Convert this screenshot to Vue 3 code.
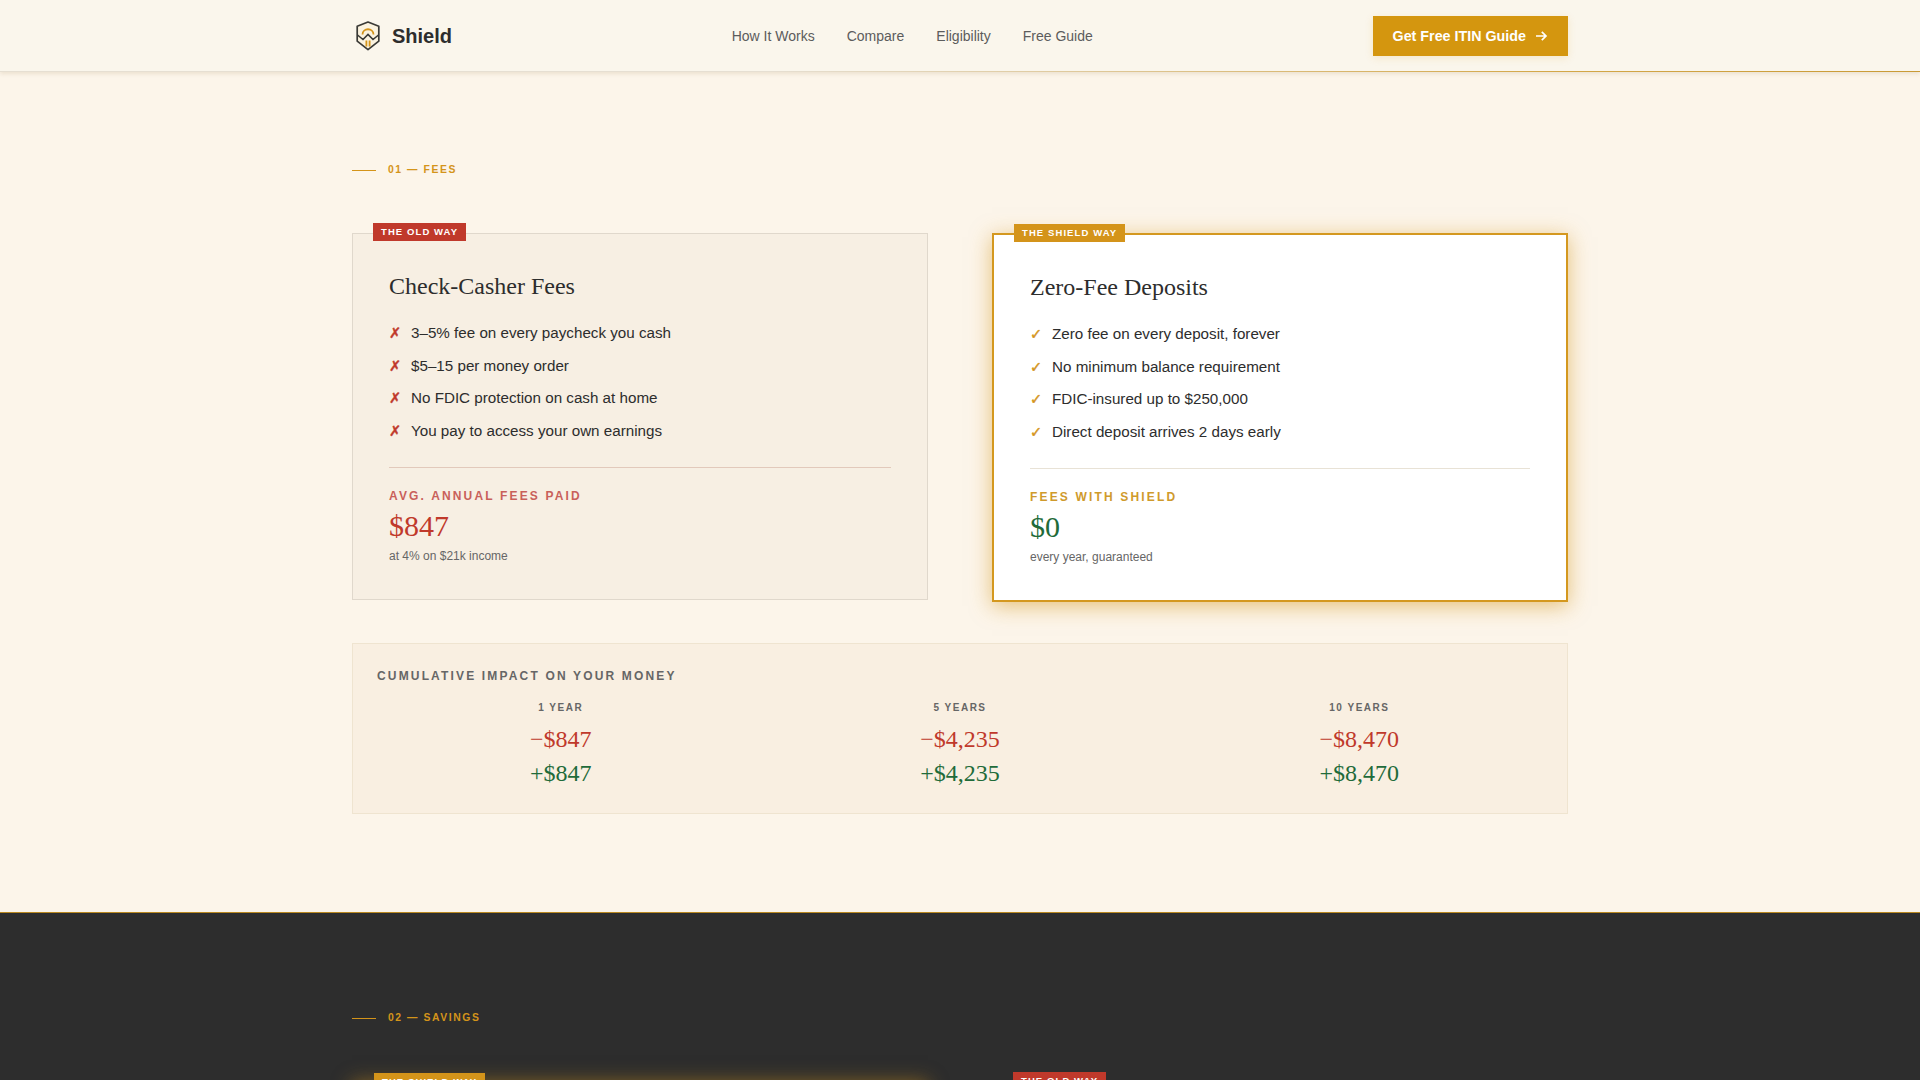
<script setup>
const links = ['How It Works', 'Compare', 'Eligibility', 'Free Guide']
const oldItems = [
  '3–5% fee on every paycheck you cash',
  '$5–15 per money order',
  'No FDIC protection on cash at home',
  'You pay to access your own earnings',
]
const newItems = [
  'Zero fee on every deposit, forever',
  'No minimum balance requirement',
  'FDIC-insured up to $250,000',
  'Direct deposit arrives 2 days early',
]
const impact = [
  { label: '1 YEAR', loss: '−$847', gain: '+$847' },
  { label: '5 YEARS', loss: '−$4,235', gain: '+$4,235' },
  { label: '10 YEARS', loss: '−$8,470', gain: '+$8,470' },
]
</script>

<template>
  <div class="page">
    <header class="nav">
      <div class="wrap nav-row">
        <div class="logo">
          <svg class="logo-icon" viewBox="0 0 32 32" fill="none">
            <path d="M16 2 26.8 6.2V21.2L16 29.6 5.2 21.2V6.2Z" fill="#fbf3df" stroke="#3a3a36" stroke-width="1.7" stroke-linejoin="round" />
            <path d="M10.5 14.5C10.5 7.5 21.5 7.5 21.5 14.5" stroke="#d4941a" stroke-width="1.8" />
            <path d="M5.5 15 11 19.5 16 14.5 21 19.5 26.5 15" stroke="#3a3a36" stroke-width="1.6" />
            <path d="M14.4 20.5V26.5M17.6 20.5V26.5" stroke="#d4941a" stroke-width="1.8" />
          </svg>
          <span class="logo-text">Shield</span>
        </div>
        <nav class="links">
          <a v-for="l in links" :key="l" class="link">{{ l }}</a>
        </nav>
        <a class="cta">
          Get Free ITIN Guide
          <svg class="cta-arrow" viewBox="0 0 14 14" fill="none">
            <path d="M2 7H12M7.8 2.8 12 7 7.8 11.2" stroke="#fff" stroke-width="1.7" />
          </svg>
        </a>
      </div>
    </header>

    <section class="fees">
      <div class="wrap">
        <div class="eyebrow"><span class="eyebrow-line"></span>01 — FEES</div>
        <div class="compare">
          <article class="card card-old">
            <span class="badge badge-old">THE OLD WAY</span>
            <h3 class="card-title">Check-Casher Fees</h3>
            <ul class="list">
              <li v-for="i in oldItems" :key="i" class="item">
                <span class="mark mark-x">✗</span>{{ i }}
              </li>
            </ul>
            <div class="stat stat-old">
              <div class="stat-label label-red">AVG. ANNUAL FEES PAID</div>
              <div class="stat-value red">$847</div>
              <div class="stat-note">at 4% on $21k income</div>
            </div>
          </article>
          <article class="card card-new">
            <span class="badge badge-new">THE SHIELD WAY</span>
            <h3 class="card-title">Zero-Fee Deposits</h3>
            <ul class="list">
              <li v-for="i in newItems" :key="i" class="item">
                <span class="mark mark-c">✓</span>{{ i }}
              </li>
            </ul>
            <div class="stat stat-new">
              <div class="stat-label label-gold">FEES WITH SHIELD</div>
              <div class="stat-value green">$0</div>
              <div class="stat-note">every year, guaranteed</div>
            </div>
          </article>
        </div>
        <div class="impact">
          <div class="impact-title">CUMULATIVE IMPACT ON YOUR MONEY</div>
          <div class="impact-grid">
            <div v-for="c in impact" :key="c.label" class="impact-col">
              <div class="impact-label">{{ c.label }}</div>
              <div class="impact-val red">{{ c.loss }}</div>
              <div class="impact-val green">{{ c.gain }}</div>
            </div>
          </div>
        </div>
      </div>
    </section>

    <section class="savings">
      <div class="wrap">
        <div class="eyebrow eyebrow-dark"><span class="eyebrow-line"></span>02 — SAVINGS</div>
        <div class="compare">
          <article class="card card-new dark-new">
            <span class="badge badge-new">THE SHIELD WAY</span>
          </article>
          <article class="card dark-old">
            <span class="badge badge-old">THE OLD WAY</span>
          </article>
        </div>
      </div>
    </section>
  </div>
</template>

<style>
html, body { margin: 0; background: #2d2d2d; }
</style>

<style scoped>
.page {
  height: 1080px;
  overflow: hidden;
  background: #fcf5ea;
  font-family: "Liberation Sans", Arial, sans-serif;
  color: #2d2d2d;
}
.wrap { width: 1216px; margin: 0 auto; }
.nav {
  height: 71px;
  background: #faf6ec;
  border-bottom: 1px solid transparent;
  border-image: linear-gradient(90deg, #e6dfd2 0%, #e6dfd2 40%, #d4a84a 80%, #c99a35 100%) 1;
  box-shadow: 0 2px 4px rgba(180, 160, 120, 0.22);
}
.nav-row { height: 71px; display: flex; align-items: center; justify-content: space-between; }
.logo { display: flex; align-items: center; gap: 8px; width: 100px; }
.logo-icon { width: 32px; height: 32px; flex: none; }
.logo-text { font-size: 20px; font-weight: 700; line-height: 1; }
.links { display: flex; gap: 32px; }
.link { font-size: 14px; color: #5c5c5c; }
.cta {
  display: flex;
  align-items: center;
  gap: 8px;
  height: 40px;
  padding: 0 20px;
  box-sizing: border-box;
  background: #d4960f;
  color: #fff;
  font-size: 14.3px;
  font-weight: 700;
  box-shadow: 0 2px 8px rgba(212, 150, 15, 0.15);
}
.cta-arrow { width: 14px; height: 14px; }

.fees { padding: 90px 0 98px; }
.fees .compare { margin-top: 55px; }
.eyebrow {
  display: flex;
  align-items: center;
  gap: 12px;
  font-size: 10.4px;
  line-height: 16px;
  font-weight: 700;
  letter-spacing: 0.15em;
  color: #d4941a;
}
.eyebrow-line { width: 24px; height: 1px; background: #d4941a; }
.compare {
  display: grid;
  grid-template-columns: 576px 576px;
  column-gap: 64px;
  align-items: start;
  margin-top: 56px;
}
.card { position: relative; box-sizing: border-box; }
.card-old {
  height: 367px;
  padding: 36px 36px 0;
  background: #f7efe3;
  border: 1px solid #e0d8cc;
}
.card-new {
  height: 369px;
  padding: 36px 36px 0;
  background: #fff;
  border: 2px solid #d4981f;
  box-shadow: 0 4px 20px rgba(212, 148, 26, 0.55);
}
.badge {
  position: absolute;
  top: -11px;
  left: 20px;
  height: 18px;
  padding: 0 8px;
  font-size: 9.5px;
  line-height: 17px;
  font-weight: 700;
  letter-spacing: 0.115em;
  color: #fff;
  white-space: nowrap;
}
.badge-old { background: #c0392b; }
.badge-new { background: #d4941a; }
.card-title {
  margin: 0 0 20px;
  font-family: "Liberation Serif", "Times New Roman", serif;
  font-size: 24px;
  line-height: 32px;
  font-weight: 400;
  color: #2d2d2d;
}
.list { margin: 0; padding: 0; list-style: none; }
.item {
  display: flex;
  align-items: center;
  font-size: 15.2px;
  line-height: 22.7px;
  margin-bottom: 10px;
  color: #2d2d2d;
}
.mark {
  flex: none;
  width: 22px;
  font-family: "DejaVu Sans", sans-serif;
  font-size: 14.5px;
  font-weight: 700;
  -webkit-text-stroke: 0.4px currentColor;
}
.mark-x { color: #c0392b; }
.mark-c { color: #d4941a; }
.stat { margin-top: 24px; padding-top: 20px; border-top: 1px solid; }
.stat-old { border-color: #e2c9bb; }
.stat-new { border-color: #e8e2d6; }
.stat-label { font-size: 12px; line-height: 16px; font-weight: 700; letter-spacing: 0.18em; }
.label-red { color: #c9605a; }
.label-gold { color: #cf9a2c; }
.stat-value {
  font-family: "Liberation Serif", "Times New Roman", serif;
  font-size: 30px;
  line-height: 36px;
  margin-top: 4px;
}
.red { color: #c0392b; }
.green { color: #1f6b3a; }
.stat-note { font-size: 12px; line-height: 18px; margin-top: 3px; color: #666; }

.impact {
  box-sizing: border-box;
  height: 171px;
  margin-top: 41px;
  padding: 24px 24px 0;
  background: #f9efe1;
  border: 1px solid #efe4d0;
}
.impact-title { font-size: 12px; line-height: 16px; font-weight: 700; letter-spacing: 0.18em; color: #666; }
.impact-grid { display: grid; grid-template-columns: repeat(3, 1fr); column-gap: 32px; margin-top: 17px; text-align: center; }
.impact-label { font-size: 10px; line-height: 14px; font-weight: 700; letter-spacing: 0.15em; color: #666; margin-bottom: 7px; }
.impact-val {
  font-family: "Liberation Serif", "Times New Roman", serif;
  font-size: 24px;
  line-height: 34px;
}

.savings {
  height: 168px;
  padding-top: 97px;
  box-sizing: content-box;
  background: #2d2d2d;
  border-top: 1px solid #b8871f;
}
.dark-new {
  height: 369px;
  background: #2d2d2d;
  box-shadow: 0 0 18px rgba(212, 148, 26, 0.55);
}
.dark-old {
  height: 369px;
  background: #333;
  border: 1px solid #444;
}
</style>
